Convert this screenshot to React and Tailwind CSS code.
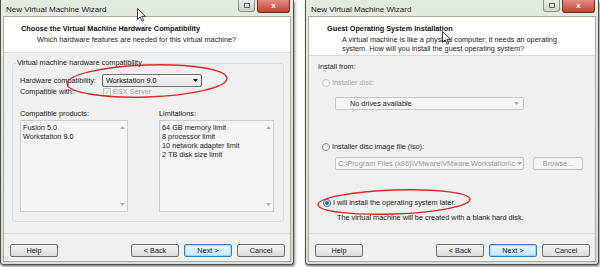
import React from "react";

const FONT = "font-['Liberation_Sans',Arial,sans-serif]";

function Arrow({ dir = "down", color = "#222" }) {
  return (
    <svg width="5" height="3" viewBox="0 0 5 3" className="shrink-0">
      {dir === "down" ? <path d="M0 0h5L2.5 3z" fill={color} /> : <path d="M0 3h5L2.5 0z" fill={color} />}
    </svg>
  );
}

function Btn({ children, primary, disabled }) {
  const base = "h-[13px] w-[48px] rounded-[2px] border flex items-center justify-center text-[7.3px] leading-none";
  if (disabled)
    return <div className={base + " border-[#c4c4c4] bg-[#f4f4f4] text-[#9a9a9a] w-[50px]"}>{children}</div>;
  if (primary)
    return (
      <div className={base + " border-[#3c7fb1] bg-linear-to-b from-[#eaf6fd] to-[#bee6fd] text-[#1a1a1a] shadow-[inset_0_0_0_1px_#a7d9f5]"}>
        {children}
      </div>
    );
  return <div className={base + " border-[#707070] bg-linear-to-b from-[#f4f4f4] to-[#dcdcdc] text-[#1a1a1a]"}>{children}</div>;
}

function Radio({ state }) {
  if (state === "checked")
    return (
      <div className="w-[8px] h-[8px] rounded-full border border-[#2c628b] bg-white flex items-center justify-center shrink-0">
        <div className="w-[4px] h-[4px] rounded-full bg-[#1e6bb0]" />
      </div>
    );
  if (state === "disabled")
    return <div className="w-[8px] h-[8px] rounded-full border border-[#c9c9c9] bg-[#f4f4f4] shrink-0" />;
  return <div className="w-[8px] h-[8px] rounded-full border border-[#8a8a8a] bg-linear-to-b from-[#e2e2e2] to-[#fafafa] shrink-0" />;
}

function TitleBar() {
  return (
    <div className="h-[16px] flex items-start justify-between pl-[5px] pr-[3px]">
      <div className="text-[8px] leading-none pt-[6px] text-[#1c1c1c]">New Virtual Machine Wizard</div>
      <div className="flex items-start gap-[2px]">
        <div className="w-[17px] h-[12px] rounded-b-[3px] border border-t-0 border-[#8d958a] bg-linear-to-b from-[#e9ede7] to-[#cdd4c9] flex items-center justify-center">
          <div className="w-[6px] h-[5px] border border-[#5c6359]" />
        </div>
        <div className="w-[33px] h-[13px] rounded-b-[3px] border border-t-0 border-[#7a2a24] bg-linear-to-b from-[#e08b80] to-[#c2412f] flex items-center justify-center text-white text-[8px] font-bold leading-none">
          x
        </div>
      </div>
    </div>
  );
}

function Footer() {
  return (
    <div className="border-t border-[#dcdcdc] bg-[#f0f0f0] flex items-center pl-[6px] pr-[5px] pt-[10px] pb-[4px]">
      <Btn>Help</Btn>
      <div className="flex-1" />
      <div className="flex gap-[5px]">
        <Btn>&lt; Back</Btn>
        <Btn primary>Next &gt;</Btn>
        <Btn>Cancel</Btn>
      </div>
    </div>
  );
}

function Win({ children }) {
  return (
    <div className="w-[294px] h-[265px] shrink-0 flex flex-col bg-linear-to-b from-[#e3eadf] to-[#d6dfd1] border-x border-b border-[#4a5148] rounded-b-[3px] shadow-[1px_2px_3px_rgba(0,0,0,0.45)]">
      <TitleBar />
      <div className="flex-1 mx-[2px] mb-[2px] border border-[#a3ad9e] flex flex-col bg-[#f0f0f0] text-[7.3px] leading-[10px] text-[#222]">
        {children}
      </div>
    </div>
  );
}

function ListBox({ items, width }) {
  return (
    <div className={"mt-[1px] h-[92px] border border-[#cfcfcf] bg-[#f5f5f5] flex " + width}>
      <div className="flex-1 pl-[2px] pt-[2px] leading-[9px]">
        {items.map((t) => (
          <div key={t}>{t}</div>
        ))}
      </div>
      <div className="w-[9px] flex flex-col items-center justify-between py-[5px]">
        <Arrow dir="up" color="#b0b0b0" />
        <Arrow dir="down" color="#b0b0b0" />
      </div>
    </div>
  );
}

function LeftWindow() {
  return (
    <Win>
      <div className="h-[36px] bg-white border-b border-[#d8d8d8] pt-[7px]">
        <div className="pl-[17px] font-bold text-[#111]">Choose the Virtual Machine Hardware Compatibility</div>
        <div className="pl-[33px] mt-[1px]">Which hardware features are needed for this virtual machine?</div>
      </div>
      <div className="flex-1 pt-[5px] pl-[8px] pr-[6px]">
        <fieldset className="h-[164px] border border-[#d5dfe5] rounded-[3px] pl-[7px]">
          <legend className="ml-[-4px] px-[1px]">Virtual machine hardware compatibility</legend>
          <div className="mt-[6px] flex items-center h-[13px]">
            <div className="w-[82px] whitespace-nowrap">Hardware compatibility:</div>
            <div className="w-[100px] h-[13px] border border-[#707070] rounded-[2px] bg-linear-to-b from-[#f6f6f6] to-[#e4e4e4] flex items-center justify-between pl-[3px] pr-[3px]">
              <span className="text-[#111]">Workstation 9.0</span>
              <Arrow />
            </div>
          </div>
          <div className="flex items-center h-[10px]">
            <div className="w-[83px] whitespace-nowrap">Compatible with:</div>
            <div className="w-[8px] h-[8px] border border-[#c4c4c4] bg-[#f4f4f4] flex items-center justify-center text-[6px] leading-none text-[#bbb]">✓</div>
            <div className="ml-[2px] text-[#a8a8a8]">ESX Server</div>
          </div>
          <div className="mt-[12px] flex gap-[31px]">
            <div>
              <div>Compatible products:</div>
              <ListBox width="w-[108px]" items={["Fusion 5.0", "Workstation 9.0"]} />
            </div>
            <div>
              <div>Limitations:</div>
              <ListBox
                width="w-[115px]"
                items={["64 GB memory limit", "8 processor limit", "10 network adapter limit", "2 TB disk size limit"]}
              />
            </div>
          </div>
        </fieldset>
      </div>
      <Footer />
    </Win>
  );
}

function RightWindow() {
  return (
    <Win>
      <div className="h-[39px] bg-white border-b border-[#d8d8d8] pt-[7px]">
        <div className="pl-[18px] font-bold text-[#111]">Guest Operating System Installation</div>
        <div className="pl-[33px] mt-[1px] leading-[9px]">
          <div>A virtual machine is like a physical computer; it needs an operating</div>
          <div>system. How will you install the guest operating system?</div>
        </div>
      </div>
      <div className="flex-1 pt-[6px] pl-[9px]">
        <div>Install from:</div>
        <div className="mt-[6px] flex items-center h-[10px] pl-[4px] gap-[2px]">
          <Radio state="disabled" />
          <span className="text-[#a8a8a8]">Installer disc:</span>
        </div>
        <div className="mt-[9px] ml-[17px] w-[189px] h-[13px] border border-[#c8c8c8] rounded-[2px] bg-[#f5f5f5] flex items-center justify-between pl-[14px] pr-[4px]">
          <span>No drives available</span>
          <Arrow color="#a8a8a8" />
        </div>
        <div className="mt-[32px] flex items-center h-[10px] pl-[4px] gap-[2px]">
          <Radio />
          <span>Installer disc image file (iso):</span>
        </div>
        <div className="mt-[5px] ml-[17px] flex items-center gap-[9px]">
          <div className="w-[189px] h-[13px] border border-[#c8c8c8] rounded-[2px] bg-[#f5f5f5] flex items-center pl-[2px] pr-[4px]">
            <span className="flex-1 whitespace-nowrap text-[#9a9a9a]">C:\Program Files (x86)\VMware\VMware Workstation\c</span>
            <div className="ml-[2px]">
              <Arrow color="#a8a8a8" />
            </div>
          </div>
          <Btn disabled>Browse...</Btn>
        </div>
        <div className="mt-[28px] flex items-center h-[10px] pl-[5px] gap-[2px]">
          <Radio state="checked" />
          <span>I will install the operating system later.</span>
        </div>
        <div className="mt-[5px] ml-[19px]">The virtual machine will be created with a blank hard disk.</div>
      </div>
      <Footer />
    </Win>
  );
}

function Cursor({ x, y }) {
  return (
    <svg className="absolute" style={{ left: x, top: y }} width="9" height="14" viewBox="0 0 9 14">
      <path d="M0.5 0.5v11l2.7-2.6 1.9 4.3 1.6-0.7-1.9-4.2h3.7z" fill="#fff" stroke="#111" strokeWidth="0.8" strokeLinejoin="round" />
    </svg>
  );
}

export default function App() {
  return (
    <div className={"relative w-[600px] h-[267px] bg-white overflow-hidden flex gap-[11px] " + FONT}>
      <LeftWindow />
      <RightWindow />
      <svg className="absolute left-0 top-0 pointer-events-none" width="600" height="267">
        <ellipse cx="147" cy="81" rx="80" ry="16" fill="none" stroke="#e2262b" strokeWidth="1.4" transform="rotate(-2 147 81)" />
        <ellipse cx="394" cy="202" rx="76" ry="12" fill="none" stroke="#e2262b" strokeWidth="1.4" transform="rotate(-2 394 202)" />
      </svg>
      <Cursor x={137} y={8} />
      <Cursor x={442} y={31} />
    </div>
  );
}
